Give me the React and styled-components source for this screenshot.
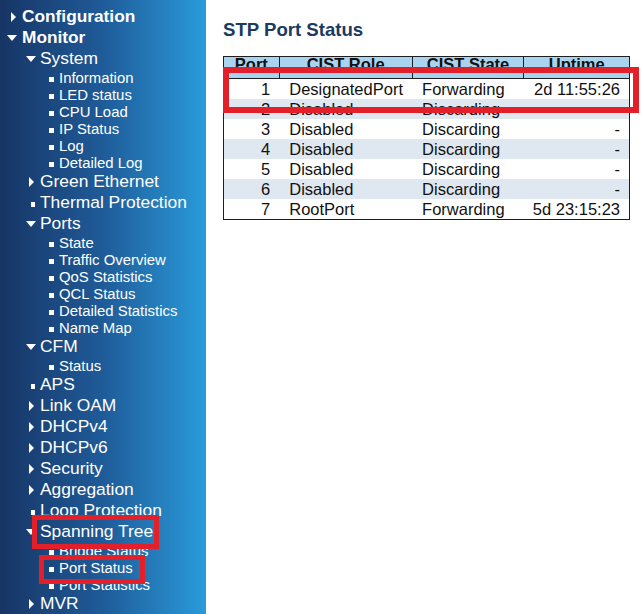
import React from 'react';
import styled, { createGlobalStyle } from 'styled-components';

const GlobalStyle = createGlobalStyle`
  html, body {
    margin: 0;
    padding: 0;
    overflow: hidden;
    background: #ffffff;
    font-family: "Liberation Sans", Arial, sans-serif;
  }
`;

const Page = styled.div`
  position: relative;
  display: flex;
  width: 644px;
  height: 614px;
  overflow: hidden;
`;

const Sidebar = styled.nav`
  flex: 0 0 206px;
  height: 100%;
  padding-top: 6px;
  box-sizing: border-box;
  background: linear-gradient(to right, #173565 0%, #1f5b99 50%, #2a9bda 100%);
  color: #ffffff;
  overflow: hidden;
`;

// per level: row height, left padding, marker width, font
const levels = {
  1: { h: 21, pad: 7, mark: 15, size: '17.3px', weight: 700 },
  2: { h: 21, pad: 26, mark: 14, size: '17.4px', weight: 400 },
  3: { h: 17, pad: 49, mark: 10, size: '14.9px', weight: 400 },
};

const Row = styled.div`
  display: flex;
  align-items: center;
  height: ${(p) => levels[p.$level].h}px;
  padding-left: ${(p) => levels[p.$level].pad}px;
  font-size: ${(p) => levels[p.$level].size};
  font-weight: ${(p) => levels[p.$level].weight};
  white-space: nowrap;
`;

const Marker = styled.span`
  display: flex;
  align-items: center;
  flex: 0 0 ${(p) => levels[p.$level].mark}px;
  height: 100%;
`;

const DownArrow = styled.span`
  width: 0;
  height: 0;
  margin-top: 1px;
  border-left: 5.5px solid transparent;
  border-right: 5.5px solid transparent;
  border-top: 6px solid #ffffff;
`;

const RightArrow = styled.span`
  width: 0;
  height: 0;
  margin-left: ${(p) => (p.$level === 1 ? 4 : 3)}px;
  margin-top: 1px;
  border-top: 5px solid transparent;
  border-bottom: 5px solid transparent;
  border-left: 5.5px solid #ffffff;
`;

const Bullet = styled.span`
  width: ${(p) => (p.$level === 3 ? 5 : 4)}px;
  height: 5px;
  margin-left: ${(p) => (p.$level === 3 ? 0 : 5)}px;
  margin-top: 4px;
  background: #ffffff;
`;

const Main = styled.main`
  flex: 1;
  padding: 19px 0 0 17px;
`;

const Title = styled.h1`
  margin: 0 0 15px;
  font-size: 18.6px;
  line-height: 22px;
  font-weight: 700;
  color: #1b3a5e;
`;

const Table = styled.table`
  border-collapse: collapse;
  border: 1px solid #1e1e1e;
  width: 407px;
  font-size: 16.5px;
  color: #111111;
`;

const Th = styled.th`
  height: 21px;
  padding: 0;
  background: #a9d4ef;
  border: 1px solid #1e1e1e;
  font-weight: 700;
  text-align: center;
  line-height: 15px;
  vertical-align: top;
`;

const Tr = styled.tr`
  background: ${(p) => (p.$alt ? '#dfe7f0' : '#ffffff')};
`;

const Td = styled.td`
  height: 20px;
  padding: 0 ${(p) => (p.$right ? '9px' : '0')} 0 ${(p) => (p.$right ? '0' : '10px')};
  text-align: ${(p) => (p.$right ? 'right' : 'left')};
  line-height: 20px;
`;

const Highlight = styled.div`
  position: absolute;
  left: ${(p) => p.$x}px;
  top: ${(p) => p.$y}px;
  width: ${(p) => p.$w}px;
  height: ${(p) => p.$h}px;
  box-sizing: border-box;
  border: ${(p) => p.$t}px solid #e3202a;
  pointer-events: none;
`;

const menu = [
  [1, 'Configuration', 'closed'],
  [1, 'Monitor', 'open'],
  [2, 'System', 'open'],
  [3, 'Information'],
  [3, 'LED status'],
  [3, 'CPU Load'],
  [3, 'IP Status'],
  [3, 'Log'],
  [3, 'Detailed Log'],
  [2, 'Green Ethernet', 'closed'],
  [2, 'Thermal Protection', 'leaf'],
  [2, 'Ports', 'open'],
  [3, 'State'],
  [3, 'Traffic Overview'],
  [3, 'QoS Statistics'],
  [3, 'QCL Status'],
  [3, 'Detailed Statistics'],
  [3, 'Name Map'],
  [2, 'CFM', 'open'],
  [3, 'Status'],
  [2, 'APS', 'leaf'],
  [2, 'Link OAM', 'closed'],
  [2, 'DHCPv4', 'closed'],
  [2, 'DHCPv6', 'closed'],
  [2, 'Security', 'closed'],
  [2, 'Aggregation', 'closed'],
  [2, 'Loop Protection', 'leaf'],
  [2, 'Spanning Tree', 'open'],
  [3, 'Bridge Status'],
  [3, 'Port Status'],
  [3, 'Port Statistics'],
  [2, 'MVR', 'closed'],
];

const ports = [
  [1, 'DesignatedPort', 'Forwarding', '2d 11:55:26'],
  [2, 'Disabled', 'Discarding', ''],
  [3, 'Disabled', 'Discarding', '-'],
  [4, 'Disabled', 'Discarding', '-'],
  [5, 'Disabled', 'Discarding', '-'],
  [6, 'Disabled', 'Discarding', '-'],
  [7, 'RootPort', 'Forwarding', '5d 23:15:23'],
];

function MenuMarker({ level, kind }) {
  if (kind === 'open') return <DownArrow />;
  if (kind === 'closed') return <RightArrow $level={level} />;
  return <Bullet $level={level} />;
}

export default function App() {
  return (
    <Page>
      <GlobalStyle />
      <Sidebar>
        {menu.map(([level, label, kind], i) => (
          <Row key={i} $level={level}>
            <Marker $level={level}>
              <MenuMarker level={level} kind={kind} />
            </Marker>
            {label}
          </Row>
        ))}
      </Sidebar>

      <Main>
        <Title>STP Port Status</Title>
        <Table>
          <colgroup>
            <col style={{ width: 56 }} />
            <col style={{ width: 133 }} />
            <col style={{ width: 112 }} />
            <col style={{ width: 106 }} />
          </colgroup>
          <thead>
            <tr>
              <Th>Port</Th>
              <Th>CIST Role</Th>
              <Th>CIST State</Th>
              <Th>Uptime</Th>
            </tr>
          </thead>
          <tbody>
            {ports.map(([port, role, state, uptime], i) => (
              <Tr key={port} $alt={i % 2 === 1}>
                <Td $right>{port}</Td>
                <Td>{role}</Td>
                <Td>{state}</Td>
                <Td $right>{uptime}</Td>
              </Tr>
            ))}
          </tbody>
        </Table>
      </Main>

      {/* annotation boxes */}
      <Highlight $x={223} $y={67} $w={416} $h={46} $t={6} />
      <Highlight $x={32} $y={515} $w={127} $h={34} $t={5} />
      <Highlight $x={39} $y={555} $w={106} $h={29} $t={5} />
    </Page>
  );
}
